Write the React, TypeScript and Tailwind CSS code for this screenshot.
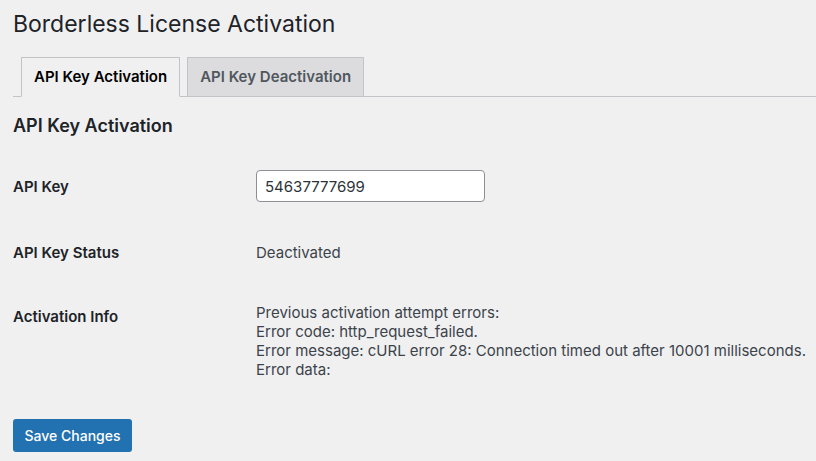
import React from "react";

export default function App() {
  const font = { fontFamily: "Inter, 'Noto Sans', sans-serif" };
  return (
    <div className="w-[816px] h-[461px] bg-[#f0f0f1] overflow-hidden" style={font}>
      <div className="pl-[13px]">
        <h1 className="pt-[9px] text-[23px] leading-[30px] font-normal text-[#1d2327]">
          Borderless License Activation
        </h1>
        <div className="mt-[18px] flex border-b border-[#c3c4c7] h-[40px] items-end">
          <div className="ml-[8px] h-[40px] -mb-px px-[12px] flex items-center border border-[#c3c4c7] border-b-[#f0f0f1] bg-[#f0f0f1] text-[15px] font-semibold text-[#000]">
            API Key Activation
          </div>
          <div className="ml-[7px] h-[39px] px-[12px] flex items-center border border-[#c3c4c7] border-b-0 bg-[#dcdcde] text-[15px] font-semibold text-[#50575e]">
            API Key Deactivation
          </div>
        </div>
        <h2 className="mt-[18px] text-[18px] leading-[22px] font-semibold text-[#1d2327]">
          API Key Activation
        </h2>
        <div className="mt-[15px] grid grid-cols-[243px_1fr] text-[15px] text-[#1d2327]">
          <div className="h-[66px] pt-[25px] font-semibold leading-[20px]">API Key</div>
          <div className="h-[66px] pt-[18px]">
            <input
              readOnly
              value="54637777699"
              className="w-[229px] h-[32px] px-[8px] rounded-[4px] border border-[#8c8f94] bg-white text-[15px] text-[#2c3338] outline-none"
              style={font}
            />
          </div>
          <div className="h-[64px] pt-[25px] font-semibold leading-[20px]">API Key Status</div>
          <div className="h-[64px] pt-[25px] text-[#3c434a] leading-[20px]">Deactivated</div>
          <div className="pt-[25px] font-semibold leading-[20px]">Activation Info</div>
          <div className="pt-[21px] text-[#3c434a] leading-[19px]">
            <div>Previous activation attempt errors:</div>
            <div>Error code: http_request_failed.</div>
            <div>Error message: cURL error 28: Connection timed out after 10001 milliseconds.</div>
            <div>Error data:</div>
          </div>
        </div>
        <button
          className="mt-[40px] h-[33px] w-[119px] flex items-center justify-center whitespace-nowrap rounded-[3px] bg-[#2271b1] text-white text-[14px] font-medium"
          style={font}
        >
          Save Changes
        </button>
      </div>
    </div>
  );
}
